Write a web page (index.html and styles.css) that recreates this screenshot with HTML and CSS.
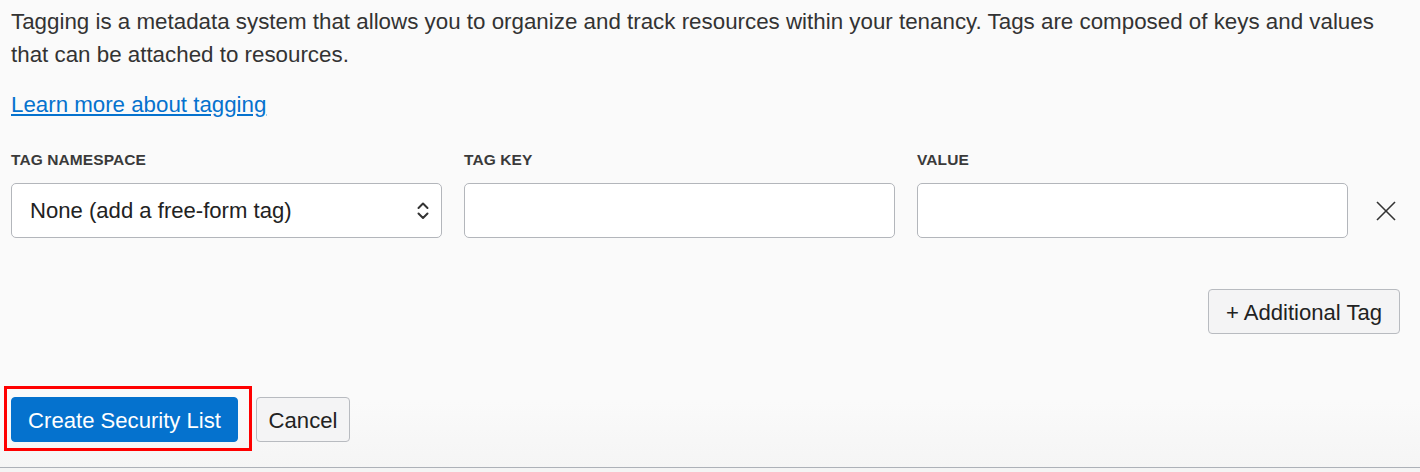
FILE: index.html
```html
<!DOCTYPE html>
<html lang="en">
<head>
<meta charset="utf-8">
<title>Tags</title>
<link rel="stylesheet" href="styles.css">
</head>
<body>
<main class="panel">
  <p class="intro">Tagging is a metadata system that allows you to organize and track resources within your tenancy. Tags are composed of keys and values that can be attached to resources.</p>
  <p class="learn"><a href="#" class="link">Learn more about tagging</a></p>

  <div class="tag-row">
    <div class="field">
      <label class="label">TAG NAMESPACE</label>
      <div class="control select">
        <span class="select-text">None (add a free-form tag)</span>
        <svg class="chevrons" width="12" height="21" viewBox="0 0 12 21" aria-hidden="true">
          <polyline points="1.5,8 6,3.5 10.5,8" fill="none" stroke="#333" stroke-width="2" stroke-linecap="round" stroke-linejoin="round"/>
          <polyline points="1.5,13.5 6,18 10.5,13.5" fill="none" stroke="#333" stroke-width="2" stroke-linecap="round" stroke-linejoin="round"/>
        </svg>
      </div>
    </div>
    <div class="field">
      <label class="label">TAG KEY</label>
      <div class="control"></div>
    </div>
    <div class="field">
      <label class="label">VALUE</label>
      <div class="control"></div>
    </div>
    <button class="remove" type="button" aria-label="Remove">
      <svg width="20" height="20" viewBox="0 0 20 20" aria-hidden="true">
        <line x1="1" y1="1" x2="19" y2="19" stroke="#333" stroke-width="1.6"/>
        <line x1="19" y1="1" x2="1" y2="19" stroke="#333" stroke-width="1.6"/>
      </svg>
    </button>
  </div>

  <div class="add-row">
    <button class="btn btn-secondary btn-add" type="button">+ Additional Tag</button>
  </div>

  <div class="actions">
    <span class="highlight">
      <button class="btn btn-primary" type="button">Create Security List</button>
    </span>
    <button class="btn btn-secondary btn-cancel" type="button">Cancel</button>
  </div>
</main>
<div class="below"></div>
</body>
</html>
```

FILE: styles.css
```css
* { box-sizing: border-box; }

html, body {
  margin: 0;
  padding: 0;
}

body {
  background: #f4f4f4;
  font-family: "Liberation Sans", Arial, Helvetica, sans-serif;
  color: #333;
}

.panel {
  background: linear-gradient(to bottom, #fafafa 0%, #fafafa 86%, #f5f5f5 100%);
  padding: 5px 20px 0 11px;
  height: 468px;
  border-bottom: 1px solid #adb1b8;
}

.intro {
  margin: 0;
  font-size: 22.35px;
  line-height: 33px;
}

.learn {
  margin: 17px 0 0 0;
  font-size: 22.3px;
  line-height: 33px;
}

.link {
  color: #0572ce;
  text-decoration: underline;
  text-underline-offset: 2px;
}

.tag-row {
  display: grid;
  grid-template-columns: 431px 431px 431px auto;
  column-gap: 22px;
  margin-top: 29px;
  align-items: end;
}

.field {
  display: flex;
  flex-direction: column;
}

.label {
  font-size: 15.5px;
  font-weight: bold;
  line-height: 20px;
  color: #3a3a3a;
  margin-bottom: 13px;
  letter-spacing: 0.1px;
}

.control {
  height: 55px;
  background: #fff;
  border: 1px solid #b3b6bb;
  border-radius: 5px;
}

.select {
  display: flex;
  align-items: center;
  justify-content: space-between;
  padding: 0 12px 0 18px;
}

.select-text {
  font-size: 22.1px;
  color: #222;
}

.chevrons {
  display: block;
}

.remove {
  align-self: end;
  height: 55px;
  width: 20px;
  margin-left: 6px;
  padding: 0;
  border: 0;
  background: transparent;
  display: flex;
  align-items: center;
}

.remove svg { display: block; }

.add-row {
  display: flex;
  justify-content: flex-end;
  margin-top: 51px;
}

.btn {
  font-family: "Liberation Sans", Arial, Helvetica, sans-serif;
  font-size: 22.1px;
  height: 45px;
  border-radius: 4px;
  padding: 3px 0 0 0;
  cursor: pointer;
  line-height: 1;
}

.btn-secondary {
  background: #f4f4f5;
  border: 1px solid #b8bbc0;
  color: #222;
}

.btn-add {
  width: 192px;
}

.btn-primary {
  background: #0572ce;
  border: 1px solid #0572ce;
  color: #fff;
  width: 227px;
}

.btn-cancel {
  width: 94px;
}

.actions {
  display: flex;
  align-items: center;
  gap: 18px;
  margin-top: 63px;
}

.highlight {
  position: relative;
  display: inline-flex;
}

.highlight::after {
  content: "";
  position: absolute;
  left: -7px;
  top: -11px;
  right: -14px;
  bottom: -9px;
  border: 3px solid #f00;
  pointer-events: none;
}

.below {
  height: 4px;
  background: #f4f4f4;
}
```
